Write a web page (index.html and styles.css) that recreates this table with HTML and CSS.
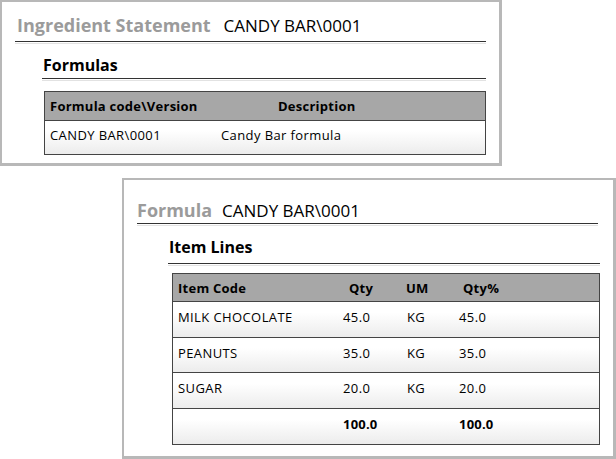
FILE: index.html
```html
<!DOCTYPE html>
<html>
<head>
<meta charset="utf-8">
<link rel="stylesheet" href="styles.css">
</head>
<body>
<div class="panel p1">
  <div class="title t1"><span class="label">Ingredient Statement</span><span class="value">CANDY BAR\0001</span></div>
  <div class="section s1">
    <div class="heading h1">Formulas</div>
    <div class="table tbl1">
      <div class="row head"><div class="c c1">Formula code\Version</div><div class="c c2h">Description</div></div>
      <div class="row body r1"><div class="c c1">CANDY BAR\0001</div><div class="c c2">Candy Bar formula</div></div>
    </div>
  </div>
</div>
<div class="panel p2">
  <div class="title t2"><span class="label">Formula</span><span class="value">CANDY BAR\0001</span></div>
  <div class="section s2">
    <div class="heading h2">Item Lines</div>
    <div class="table tbl2">
      <div class="row head g"><div class="c">Item Code</div><div class="c hq">Qty</div><div class="c">UM</div><div class="c">Qty%</div></div>
      <div class="row body g ra"><div class="c">MILK CHOCOLATE</div><div class="c">45.0</div><div class="c">KG</div><div class="c">45.0</div></div>
      <div class="row body g rb"><div class="c">PEANUTS</div><div class="c">35.0</div><div class="c">KG</div><div class="c">35.0</div></div>
      <div class="row body g ra"><div class="c">SUGAR</div><div class="c">20.0</div><div class="c">KG</div><div class="c">20.0</div></div>
      <div class="row body g ra total"><div class="c"></div><div class="c">100.0</div><div class="c"></div><div class="c">100.0</div></div>
    </div>
  </div>
</div>
</body>
</html>
```

FILE: styles.css
```css
html, body {
  margin: 0;
  padding: 0;
  background: #fff;
}
body {
  font-family: "Open Sans", "Noto Sans", sans-serif;
  color: #000;
}
.panel {
  box-sizing: border-box;
  border: 2px solid #b8b8b8;
  border-right-width: 3px;
  border-bottom-width: 3px;
  background: #fff;
}
.p1 {
  width: 502px;
  height: 166px;
  padding: 0 13px 0 13px;
}
.p2 {
  width: 494px;
  height: 281px;
  margin: 12px 0 0 122px;
  padding: 0 15px 0 13px;
}
.title {
  display: flex;
  align-items: baseline;
  border-bottom: 1px solid #333;
  box-shadow: 0 1px 0 #fff, 0 2px 0 #e2e2e2;
  line-height: 22px;
}
.t1 {
  padding: 12px 0 4px 0;
}
.t1 .label {
  margin-left: 2px;
  margin-right: 13px;
}
.t2 {
  padding: 19px 0 1px 0;
}
.t2 .label {
  margin-right: 10px;
}
.label {
  font-size: 18px;
  font-weight: 700;
  color: #9b9b9b;
}
.value {
  font-size: 17px;
  color: #000;
}
.heading {
  font-size: 16px;
  font-weight: 700;
  line-height: 20px;
  border-bottom: 1px solid #333;
  box-shadow: 0 1px 0 #fff, 0 2px 0 #e2e2e2;
  padding-left: 1px;
}
.s1 {
  margin: 13px 0 0 27px;
}
.h1 {
  padding-bottom: 3px;
}
.s2 {
  margin: 13px -2px 0 31px;
}
.h2 {
  padding-bottom: 6px;
}
.table {
  border: 1px solid #444;
  font-size: 13px;
  letter-spacing: 0.4px;
}
.tbl1 {
  margin: 12px 0 0 2px;
}
.tbl2 {
  margin: 9px 0 0 4px;
}
.row {
  display: flex;
  box-sizing: border-box;
}
.head {
  background: #a7a7a7;
  font-weight: 700;
  letter-spacing: 0.25px;
  border-bottom: 1px solid #444;
}
.body {
  background: linear-gradient(#ffffff, #ffffff 30%, #ececec);
}
.tbl1 .head {
  height: 29px;
  align-items: center;
}
.tbl1 .body {
  height: 33px;
  padding-top: 5px;
}
.c {
  padding-left: 5px;
  white-space: nowrap;
}
.tbl1 .c1 {
  width: 166px;
}
.c2h {
  padding-left: 62px;
}
.tbl1 .c2 {
  padding-left: 5px;
}
.g {
  display: grid;
  grid-template-columns: 170px 58px 57px 1fr;
}
.tbl2 .head {
  height: 28px;
  align-items: center;
}
.tbl2 .head .c {
  padding-left: 5px;
}
.tbl2 .head .hq {
  padding-left: 6px;
}
.tbl2 .body {
  border-bottom: 1px solid #444;
  padding-top: 6px;
}
.ra {
  height: 36px;
}
.rb {
  height: 35px;
}
.total {
  border-bottom: none !important;
  height: 35px;
  font-weight: 700;
  letter-spacing: 0.2px;
}
.tbl2 .body .c:nth-child(1) {
  padding-left: 5px;
}
.tbl2 .body .c:nth-child(2) {
  padding-left: 0;
}
.tbl2 .body .c:nth-child(3) {
  padding-left: 6px;
}
.tbl2 .body .c:nth-child(4) {
  padding-left: 1px;
}
```
